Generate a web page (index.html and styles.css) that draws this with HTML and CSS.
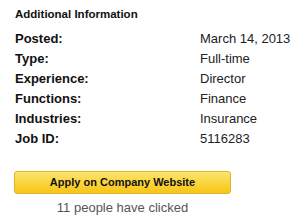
FILE: index.html
```html
<!DOCTYPE html>
<html>
<head>
<meta charset="utf-8">
<link rel="stylesheet" href="styles.css">
</head>
<body>
<div class="panel">
  <h2 class="title">Additional Information</h2>
  <dl class="info">
    <dt>Posted:</dt><dd>March 14, 2013</dd>
    <dt>Type:</dt><dd>Full-time</dd>
    <dt>Experience:</dt><dd>Director</dd>
    <dt>Functions:</dt><dd>Finance</dd>
    <dt>Industries:</dt><dd>Insurance</dd>
    <dt>Job ID:</dt><dd>5116283</dd>
  </dl>
  <div class="apply">
    <button class="apply-btn">Apply on Company Website</button>
    <div class="clicks">11 people have clicked</div>
  </div>
</div>
</body>
</html>
```

FILE: styles.css
```css
html, body {
  margin: 0;
  padding: 0;
  background: #fff;
}
body {
  font-family: "Liberation Sans", Arial, Helvetica, sans-serif;
  color: #111;
}
.panel {
  padding: 7px 0 0 15px;
}
.title {
  margin: 0;
  font-size: 11.5px;
  line-height: 14px;
  font-weight: bold;
  color: #111;
}
.info {
  margin: 8px 0 0 0;
  display: grid;
  grid-template-columns: 185px auto;
  font-size: 13px;
  line-height: 20px;
}
.info dt {
  font-weight: bold;
  color: #111;
}
.info dd {
  margin: 0;
  color: #222;
}
.apply {
  margin: 22px 0 0 -1px;
  width: 217px;
  display: flex;
  flex-direction: column;
  align-items: center;
}
.apply-btn {
  box-sizing: border-box;
  width: 217px;
  height: 23px;
  margin: 0;
  padding: 0;
  border: 1px solid #e2b52c;
  border-radius: 3px;
  background: linear-gradient(#fde46e, #f8c516);
  font-family: "Liberation Sans", Arial, Helvetica, sans-serif;
  font-size: 11px;
  font-weight: bold;
  line-height: 21px;
  color: #111;
}
.clicks {
  margin-top: 5px;
  font-size: 13px;
  line-height: 17px;
  color: #555;
}
```
